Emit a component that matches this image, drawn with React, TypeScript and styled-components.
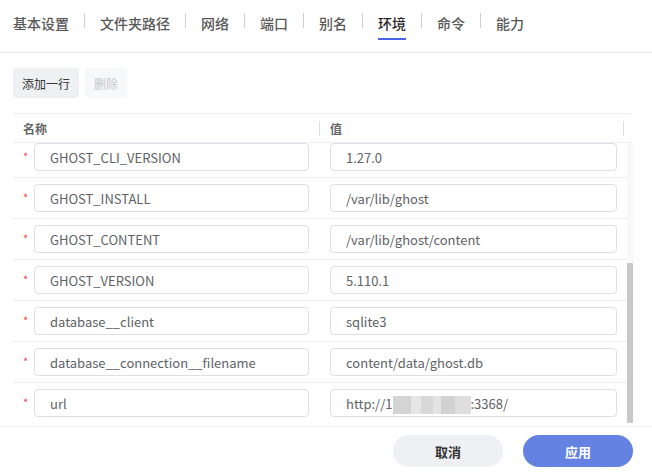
import React, { useLayoutEffect, useRef, useState } from "react";
import styled, { createGlobalStyle } from "styled-components";

const GlobalStyle = createGlobalStyle`
  html, body { margin: 0; padding: 0; background: #fff; }
  body { font-family: "Noto Sans CJK SC", "Noto Sans", sans-serif; }
  * { box-sizing: border-box; }
`;

const Page = styled.div`
  width: 652px;
  height: 472px;
  display: flex;
  flex-direction: column;
  overflow: hidden;
  background: #fff;
`;

const TabBar = styled.div`
  display: flex;
  align-items: flex-start;
  height: 53px;
  padding-left: 13px;
  border-bottom: 1px solid #e6e7eb;
`;

const TabItem = styled.div<{ $first?: boolean }>`
  padding: 10px 15px 0 ${(p) => (p.$first ? "0" : "15px")};
`;

const TabLabel = styled.span<{ $active?: boolean }>`
  display: inline-block;
  font-size: 14px;
  line-height: 20px;
  font-weight: 500;
  color: ${(p) => (p.$active ? "#262626" : "#585858")};
  padding-bottom: 5px;
  border-bottom: 2px solid ${(p) => (p.$active ? "#4764e8" : "transparent")};
`;

const TabDivider = styled.div`
  width: 1px;
  height: 15px;
  margin-top: 13px;
  background: #cfcfcf;
`;

const Content = styled.div`
  padding: 15px 19px 0 13px;
`;

const Toolbar = styled.div`
  display: flex;
  gap: 6px;
`;

const ToolButton = styled.button<{ $disabled?: boolean }>`
  height: 30px;
  padding: 0 9px;
  border: none;
  border-radius: 4px;
  font-family: inherit;
  font-size: 12px;
  background: ${(p) => (p.$disabled ? "#f7f8fa" : "#eef0f3")};
  color: ${(p) => (p.$disabled ? "#c4c7cd" : "#333")};
`;

const Table = styled.div`
  margin-top: 15px;
  border-top: 1px solid #ebeef2;
`;

const HeaderRow = styled.div`
  display: grid;
  grid-template-columns: 306px 1px 303px 1px 1fr;
  align-items: center;
  height: 29px;
  border-bottom: 1px solid #ebeef2;
`;

const HeaderCell = styled.div`
  padding-left: 10px;
  font-size: 12px;
  font-weight: 700;
  color: #666;
`;

const HeaderDivider = styled.div`
  height: 15px;
  background: #dcdde0;
`;

const BodyWrap = styled.div`
  display: flex;
  height: 280px;
`;

const Body = styled.div`
  flex: 1;
  overflow: hidden;
`;

const ScrollTrack = styled.div`
  width: 6px;
  flex: none;
  background: #f8f8f8;
`;

const ScrollThumb = styled.div`
  width: 6px;
  background: #c8c8c8;
  border-radius: 1px;
`;

const Row = styled.div<{ $last?: boolean }>`
  display: grid;
  grid-template-columns: 306px 1fr;
  height: ${(p) => (p.$last ? "40px" : "41px")};
  border-bottom: ${(p) => (p.$last ? "none" : "1px solid #ebeef2")};
`;

const NameCell = styled.div`
  display: flex;
  align-items: center;
  padding: 0 10px;
`;

const ValueCell = styled.div`
  display: flex;
  align-items: center;
  padding: 0 10px 0 11px;
`;

const Required = styled.span`
  width: 11px;
  flex: none;
  color: #f04848;
  font-size: 11px;
  line-height: 11px;
  margin-top: -2px;
`;

const Field = styled.div`
  flex: 1;
  height: 28px;
  display: flex;
  align-items: center;
  padding: 0 15px;
  border: 1px solid #dcdfe6;
  border-radius: 4px;
  font-size: 13px;
  color: #606266;
  white-space: nowrap;
  overflow: hidden;
`;

const Mosaic = styled.span`
  display: inline-block;
  flex: none;
  width: 78px;
  height: 18px;
  margin-top: 4px;
  background: linear-gradient(
    90deg,
    #d4d4d4 0 18px,
    #e6e6e6 18px 28px,
    #d8d8d8 28px 40px,
    #e4e4e4 40px 48px,
    #d2d2d2 48px 62px,
    #dedede 62px 78px
  );
`;

const Footer = styled.div`
  margin-top: 3px;
  border-top: 1px solid #f0f0f2;
  padding: 8px 19px 0;
  display: flex;
  justify-content: flex-end;
  gap: 20px;
`;

const FooterButton = styled.button<{ $primary?: boolean }>`
  width: 110px;
  height: 32px;
  border: none;
  border-radius: 16px;
  font-family: inherit;
  font-size: 13px;
  font-weight: 700;
  background: ${(p) => (p.$primary ? "#6482e2" : "#eff0f4")};
  color: ${(p) => (p.$primary ? "#fff" : "#333")};
`;

const tabs = ["基本设置", "文件夹路径", "网络", "端口", "别名", "环境", "命令", "能力"];

const envs: { name: string; value: React.ReactNode }[] = [
  { name: "PATH", value: "/usr/local/sbin:/usr/local/bin:/usr/sbin:/usr/bin:/sbin:/bin" },
  { name: "NODE_VERSION", value: "18.20.6" },
  { name: "YARN_VERSION", value: "1.22.22" },
  { name: "GOSU_VERSION", value: "1.17" },
  { name: "NODE_ENV", value: "production" },
  { name: "GHOST_CLI_VERSION", value: "1.27.0" },
  { name: "GHOST_INSTALL", value: "/var/lib/ghost" },
  { name: "GHOST_CONTENT", value: "/var/lib/ghost/content" },
  { name: "GHOST_VERSION", value: "5.110.1" },
  { name: "database__client", value: "sqlite3" },
  { name: "database__connection__filename", value: "content/data/ghost.db" },
  {
    name: "url",
    value: (
      <>
        http://1
        <Mosaic />
        :3368/
      </>
    ),
  },
];

export default function App() {
  const bodyRef = useRef<HTMLDivElement>(null);
  const [thumb, setThumb] = useState({ top: 0, height: 0 });

  useLayoutEffect(() => {
    const el = bodyRef.current;
    if (!el) return;
    el.scrollTop = el.scrollHeight;
    const total = el.scrollHeight;
    const view = el.clientHeight;
    setThumb({
      top: (el.scrollTop / total) * view,
      height: (view / total) * view,
    });
  }, []);

  return (
    <Page>
      <GlobalStyle />
      <TabBar>
        {tabs.map((t, i) => (
          <React.Fragment key={t}>
            {i > 0 && <TabDivider />}
            <TabItem $first={i === 0}>
              <TabLabel $active={t === "环境"}>{t}</TabLabel>
            </TabItem>
          </React.Fragment>
        ))}
      </TabBar>
      <Content>
        <Toolbar>
          <ToolButton>添加一行</ToolButton>
          <ToolButton $disabled>删除</ToolButton>
        </Toolbar>
        <Table>
          <HeaderRow>
            <HeaderCell>名称</HeaderCell>
            <HeaderDivider />
            <HeaderCell>值</HeaderCell>
            <HeaderDivider />
            <div />
          </HeaderRow>
          <BodyWrap>
            <Body ref={bodyRef}>
              {envs.map((e, i) => (
                <Row key={e.name} $last={i === envs.length - 1}>
                  <NameCell>
                    <Required>*</Required>
                    <Field>{e.name}</Field>
                  </NameCell>
                  <ValueCell>
                    <Field>{e.value}</Field>
                  </ValueCell>
                </Row>
              ))}
            </Body>
            <ScrollTrack>
              <ScrollThumb style={{ marginTop: thumb.top, height: thumb.height }} />
            </ScrollTrack>
          </BodyWrap>
        </Table>
      </Content>
      <Footer>
        <FooterButton>取消</FooterButton>
        <FooterButton $primary>应用</FooterButton>
      </Footer>
    </Page>
  );
}
